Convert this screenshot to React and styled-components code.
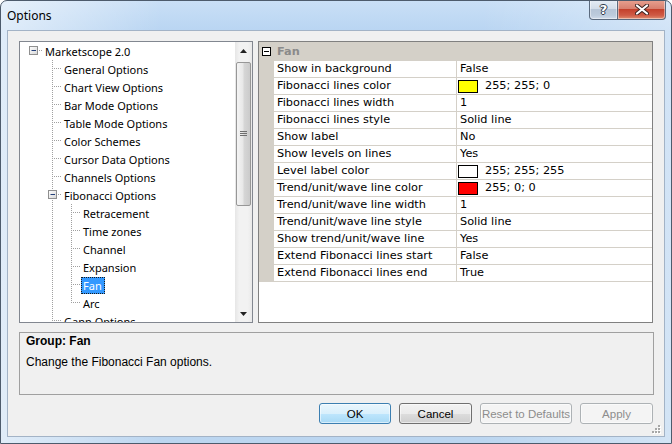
import React from "react";
import styled, { createGlobalStyle } from "styled-components";

const GlobalStyle = createGlobalStyle`
  html, body {
    margin: 0;
    padding: 0;
    background: #ffffff;
  }
  body {
    width: 672px;
    height: 444px;
    overflow: hidden;
  }
`;

const Window = styled.div`
  width: 672px;
  height: 444px;
  box-sizing: border-box;
  border: 1px solid #4d5b6c;
  border-radius: 7px 7px 0 0;
  background:
    linear-gradient(90deg, rgba(255, 255, 255, 0.55) 0, rgba(255, 255, 255, 0) 160px, rgba(255, 255, 255, 0) 480px, rgba(255, 255, 255, 0.35) 100%),
    linear-gradient(180deg, #c9dff6 0, #b9d5f2 30px, #bcd6f0 100%);
  display: flex;
  flex-direction: column;
  padding: 0 6px 6px;
  overflow: hidden;
`;

const TitleBar = styled.div`
  height: 29px;
  display: flex;
  align-items: flex-start;
  justify-content: space-between;
`;

const Title = styled.div`
  font-family: "Noto Sans", "Open Sans", sans-serif;
  font-size: 12px;
  line-height: 16px;
  color: #000;
  padding-top: 7px;
`;

const CaptionButtons = styled.div`
  display: flex;
  margin-top: -1px;
  margin-right: -1px;
`;

const CaptionButton = styled.div`
  width: ${(p) => p.$width}px;
  height: 20px;
  box-sizing: border-box;
  display: flex;
  align-items: center;
  justify-content: center;
  border: 1px solid #5a6a7e;
  border-top: none;
  border-left: ${(p) => (p.$close ? "none" : "1px solid #5a6a7e")};
  border-radius: ${(p) => (p.$close ? "0 0 4px 0" : "0 0 0 4px")};
  background: ${(p) =>
    p.$close
      ? "linear-gradient(180deg, #e8a291 0%, #d8806f 45%, #c4412c 50%, #cf5a45 80%, #e08e70 100%)"
      : "linear-gradient(180deg, #e6edf5 0%, #d3dde9 45%, #b6c5d7 50%, #bccbdc 80%, #d0dceb 100%)"};
  box-shadow: inset 0 0 0 1px rgba(255, 255, 255, 0.45);
`;

const HelpGlyph = styled.span`
  font-family: "DejaVu Sans", sans-serif;
  font-weight: bold;
  font-size: 13px;
  line-height: 13px;
  color: #ffffff;
  text-shadow: 1px 0 0 #2f3a4a, -1px 0 0 #2f3a4a, 0 1px 0 #2f3a4a, 0 -1px 0 #2f3a4a;
`;

const Client = styled.div`
  position: relative;
  flex: 1;
  background: #f0f0f0;
  border: 1px solid #a3b3c6;
  padding: 10px 10px 0 11px;
  display: flex;
  flex-direction: column;
`;

const TopRow = styled.div`
  display: flex;
  gap: 5px;
  height: 282px;
`;

/* ---------- tree ---------- */

const TreeBox = styled.div`
  width: 234px;
  box-sizing: border-box;
  border: 1px solid #828790;
  background: #ffffff;
  display: flex;
  overflow: hidden;
`;

const TreeList = styled.div`
  flex: 1;
  padding-left: 4px;
  overflow: hidden;
`;

const TreeRow = styled.div`
  height: 18px;
  display: flex;
  align-items: center;
`;

const GuideCell = styled.svg`
  width: 19px;
  height: 18px;
  flex: none;
  display: block;
`;

const TreeLabel = styled.span`
  font-family: "Noto Sans", "Open Sans", sans-serif;
  font-size: 11px;
  line-height: 15px;
  white-space: nowrap;
  padding: 0 2px 0 1px;
  border: 1px ${(p) => (p.$selected ? "dotted #1a1a1a" : "solid transparent")};
  background: ${(p) => (p.$selected ? "#3399ff" : "transparent")};
  color: ${(p) => (p.$selected ? "#ffffff" : "#000000")};
`;

const ScrollBar = styled.div`
  width: 17px;
  flex: none;
  display: flex;
  flex-direction: column;
  background: linear-gradient(90deg, #e6e6e6 0%, #f2f2f2 25%, #f2f2f2 75%, #e9e9e9 100%);
`;

const ArrowButton = styled.div`
  height: 17px;
  display: flex;
  align-items: center;
  justify-content: center;
`;

const Thumb = styled.div`
  margin: 3px 1px 0;
  height: 144px;
  box-sizing: border-box;
  border: 1px solid #979797;
  border-radius: 2px;
  background: linear-gradient(90deg, #f4f4f4 0%, #e8e8e8 45%, #d6d6d6 55%, #cbcbcb 100%);
  display: flex;
  align-items: center;
  justify-content: center;
`;

const TrackSpace = styled.div`
  flex: 1;
`;

/* ---------- property grid ---------- */

const GridPanel = styled.div`
  width: 395px;
  box-sizing: border-box;
  border: 1px solid #808080;
  background: #ffffff;
  overflow: hidden;
  font-family: "DejaVu Sans", Verdana, sans-serif;
  font-size: 11.3px;
  color: #000;
`;

const GroupHeader = styled.div`
  height: 19px;
  background: #d4d0c8;
  display: flex;
  align-items: center;
  padding-left: 3px;
  gap: 6px;
`;

const GroupTitle = styled.span`
  font-weight: bold;
  color: #8a8a8a;
  line-height: 16px;
`;

const PropRow = styled.div`
  display: grid;
  grid-template-columns: 15px 183px 1fr;
  height: 17px;
`;

const Gutter = styled.div`
  background: #d4d0c8;
`;

const Cell = styled.div`
  box-sizing: border-box;
  border-bottom: 1px solid #d4d0c8;
  border-right: ${(p) => (p.$name ? "1px solid #d4d0c8" : "none")};
  padding-left: 3px;
  display: flex;
  align-items: center;
  gap: 7px;
  line-height: 16px;
  white-space: nowrap;
  overflow: hidden;
`;

const Swatch = styled.span`
  width: 20px;
  height: 13px;
  box-sizing: border-box;
  border: 1px solid #000;
  background: ${(p) => p.$color};
  margin-left: -2px;
  flex: none;
`;

/* ---------- description & buttons ---------- */

const Description = styled.div`
  margin-top: 9px;
  width: 635px;
  height: 63px;
  box-sizing: border-box;
  border: 1px solid #a0a0a0;
  padding: 1px 6px;
  font-family: "Liberation Sans", Arial, sans-serif;
  font-size: 12px;
  line-height: 14px;
  color: #000;
`;

const DescTitle = styled.div`
  font-weight: bold;
`;

const DescText = styled.div`
  margin-top: 7px;
`;

const ButtonRow = styled.div`
  margin-top: 8px;
  display: flex;
  justify-content: flex-end;
  gap: 8px;
  padding-right: 1px;
`;

const buttonLooks = {
  default: `
    border-color: #3c7fb1;
    background: linear-gradient(180deg, #eaf6fd 0%, #d9f0fc 50%, #bee6fd 51%, #a7d9f5 100%);
    color: #000;
  `,
  normal: `
    border-color: #707070;
    background: linear-gradient(180deg, #f2f2f2 0%, #ebebeb 50%, #dddddd 51%, #cfcfcf 100%);
    color: #000;
  `,
  disabled: `
    border-color: #adb2b5;
    background: #f4f4f4;
    color: #8d8d8d;
  `,
};

const DialogButton = styled.div`
  width: ${(p) => p.$width}px;
  height: 21px;
  box-sizing: border-box;
  border: 1px solid;
  border-radius: 3px;
  display: flex;
  align-items: center;
  justify-content: center;
  font-family: "Liberation Sans", Arial, sans-serif;
  font-size: 11.5px;
  box-shadow: inset 0 0 0 1px rgba(255, 255, 255, 0.55);
  ${(p) => buttonLooks[p.$look]}
`;

const SizeGrip = styled.svg`
  position: absolute;
  right: 3px;
  bottom: 2px;
  width: 10px;
  height: 10px;
`;

/* ---------- data ---------- */

const treeItems = [
  { label: "Marketscope 2.0", cells: ["rootBox"] },
  { label: "General Options", cells: ["none", "tee"] },
  { label: "Chart View Options", cells: ["none", "tee"] },
  { label: "Bar Mode Options", cells: ["none", "tee"] },
  { label: "Table Mode Options", cells: ["none", "tee"] },
  { label: "Color Schemes", cells: ["none", "tee"] },
  { label: "Cursor Data Options", cells: ["none", "tee"] },
  { label: "Channels Options", cells: ["none", "tee"] },
  { label: "Fibonacci Options", cells: ["none", "boxTee"] },
  { label: "Retracement", cells: ["none", "pipe", "tee"] },
  { label: "Time zones", cells: ["none", "pipe", "tee"] },
  { label: "Channel", cells: ["none", "pipe", "tee"] },
  { label: "Expansion", cells: ["none", "pipe", "tee"] },
  { label: "Fan", cells: ["none", "pipe", "tee"], selected: true },
  { label: "Arc", cells: ["none", "pipe", "elbow"] },
  { label: "Gann Options", cells: ["none", "tee"] },
];

const props = [
  ["Show in background", "False"],
  ["Fibonacci lines color", "255; 255; 0", "#ffff00"],
  ["Fibonacci lines width", "1"],
  ["Fibonacci lines style", "Solid line"],
  ["Show label", "No"],
  ["Show levels on lines", "Yes"],
  ["Level label color", "255; 255; 255", "#ffffff"],
  ["Trend/unit/wave line color", "255; 0; 0", "#ff0000"],
  ["Trend/unit/wave line width", "1"],
  ["Trend/unit/wave line style", "Solid line"],
  ["Show trend/unit/wave line", "Yes"],
  ["Extend Fibonacci lines start", "False"],
  ["Extend Fibonacci lines end", "True"],
];

/* ---------- drawings ---------- */

const dot = { stroke: "#a0a0a0", strokeWidth: 1, strokeDasharray: "1 1" };

function ExpanderBox() {
  return (
    <>
      <defs>
        <linearGradient id="exp" x1="0" y1="0" x2="1" y2="1">
          <stop offset="0" stopColor="#ffffff" />
          <stop offset="1" stopColor="#d6d6d6" />
        </linearGradient>
      </defs>
      <rect x="5.5" y="4.5" width="8" height="8" fill="url(#exp)" stroke="#8f8f8f" />
      <line x1="7.5" y1="8.5" x2="12" y2="8.5" stroke="#24407a" />
    </>
  );
}

function Guide({ kind }) {
  return (
    <GuideCell viewBox="0 0 19 18">
      {kind === "pipe" && <line x1="9.5" y1="0" x2="9.5" y2="18" {...dot} />}
      {kind === "tee" && (
        <>
          <line x1="9.5" y1="0" x2="9.5" y2="18" {...dot} />
          <line x1="11" y1="8.5" x2="19" y2="8.5" {...dot} />
        </>
      )}
      {kind === "elbow" && (
        <>
          <line x1="9.5" y1="0" x2="9.5" y2="9" {...dot} />
          <line x1="11" y1="8.5" x2="19" y2="8.5" {...dot} />
        </>
      )}
      {kind === "rootBox" && (
        <>
          <line x1="15" y1="8.5" x2="19" y2="8.5" {...dot} />
          <ExpanderBox />
        </>
      )}
      {kind === "boxTee" && (
        <>
          <line x1="9.5" y1="0" x2="9.5" y2="4" {...dot} />
          <line x1="9.5" y1="14" x2="9.5" y2="18" {...dot} />
          <line x1="15" y1="8.5" x2="19" y2="8.5" {...dot} />
          <ExpanderBox />
        </>
      )}
    </GuideCell>
  );
}

function Arrow({ down }) {
  return (
    <svg width="7" height="4" viewBox="0 0 7 4">
      <path d={down ? "M0 0 H7 L3.5 4 Z" : "M3.5 0 L7 4 H0 Z"} fill="#222" />
    </svg>
  );
}

function Grip() {
  return (
    <svg width="7" height="6" viewBox="0 0 7 6">
      <line x1="0" y1="0.5" x2="7" y2="0.5" stroke="#6f6f6f" />
      <line x1="0" y1="2.5" x2="7" y2="2.5" stroke="#6f6f6f" />
      <line x1="0" y1="4.5" x2="7" y2="4.5" stroke="#6f6f6f" />
    </svg>
  );
}

function CloseGlyph() {
  return (
    <svg width="14" height="11" viewBox="0 0 14 11">
      <path d="M2 1.5 L12 9.5 M12 1.5 L2 9.5" stroke="#3b2320" strokeWidth="4" strokeLinecap="round" />
      <path d="M2 1.5 L12 9.5 M12 1.5 L2 9.5" stroke="#ffffff" strokeWidth="2.2" strokeLinecap="round" />
    </svg>
  );
}

function HeaderMinus() {
  return (
    <svg width="9" height="9" viewBox="0 0 9 9">
      <rect x="0.5" y="0.5" width="8" height="8" fill="#ffffff" stroke="#000" />
      <line x1="2" y1="4.5" x2="7" y2="4.5" stroke="#000" />
    </svg>
  );
}

export default function App() {
  return (
    <>
      <GlobalStyle />
      <Window>
        <TitleBar>
          <Title>Options</Title>
          <CaptionButtons>
            <CaptionButton $width={29}>
              <HelpGlyph>?</HelpGlyph>
            </CaptionButton>
            <CaptionButton $width={48} $close>
              <CloseGlyph />
            </CaptionButton>
          </CaptionButtons>
        </TitleBar>
        <Client>
          <TopRow>
            <TreeBox>
              <TreeList>
                {treeItems.map((item) => (
                  <TreeRow key={item.label}>
                    {item.cells.map((c, i) => (
                      <Guide key={i} kind={c} />
                    ))}
                    <TreeLabel $selected={item.selected}>{item.label}</TreeLabel>
                  </TreeRow>
                ))}
              </TreeList>
              <ScrollBar>
                <ArrowButton>
                  <Arrow />
                </ArrowButton>
                <Thumb>
                  <Grip />
                </Thumb>
                <TrackSpace />
                <ArrowButton>
                  <Arrow down />
                </ArrowButton>
              </ScrollBar>
            </TreeBox>
            <GridPanel>
              <GroupHeader>
                <HeaderMinus />
                <GroupTitle>Fan</GroupTitle>
              </GroupHeader>
              {props.map(([name, value, color]) => (
                <PropRow key={name}>
                  <Gutter />
                  <Cell $name>{name}</Cell>
                  <Cell>
                    {color && <Swatch $color={color} />}
                    {value}
                  </Cell>
                </PropRow>
              ))}
            </GridPanel>
          </TopRow>
          <Description>
            <DescTitle>Group: Fan</DescTitle>
            <DescText>Change the Fibonacci Fan options.</DescText>
          </Description>
          <ButtonRow>
            <DialogButton $width={72} $look="default">OK</DialogButton>
            <DialogButton $width={73} $look="normal">Cancel</DialogButton>
            <DialogButton $width={92} $look="disabled">Reset to Defaults</DialogButton>
            <DialogButton $width={73} $look="disabled">Apply</DialogButton>
          </ButtonRow>
          <SizeGrip viewBox="0 0 10 10">
            {[
              [7, 1],
              [4, 4],
              [7, 4],
              [1, 7],
              [4, 7],
              [7, 7],
            ].map(([x, y]) => (
              <g key={`${x}-${y}`}>
                <rect x={x + 1} y={y + 1} width="2" height="2" fill="#ffffff" />
                <rect x={x} y={y} width="2" height="2" fill="#a7a7a7" />
              </g>
            ))}
          </SizeGrip>
        </Client>
      </Window>
    </>
  );
}
